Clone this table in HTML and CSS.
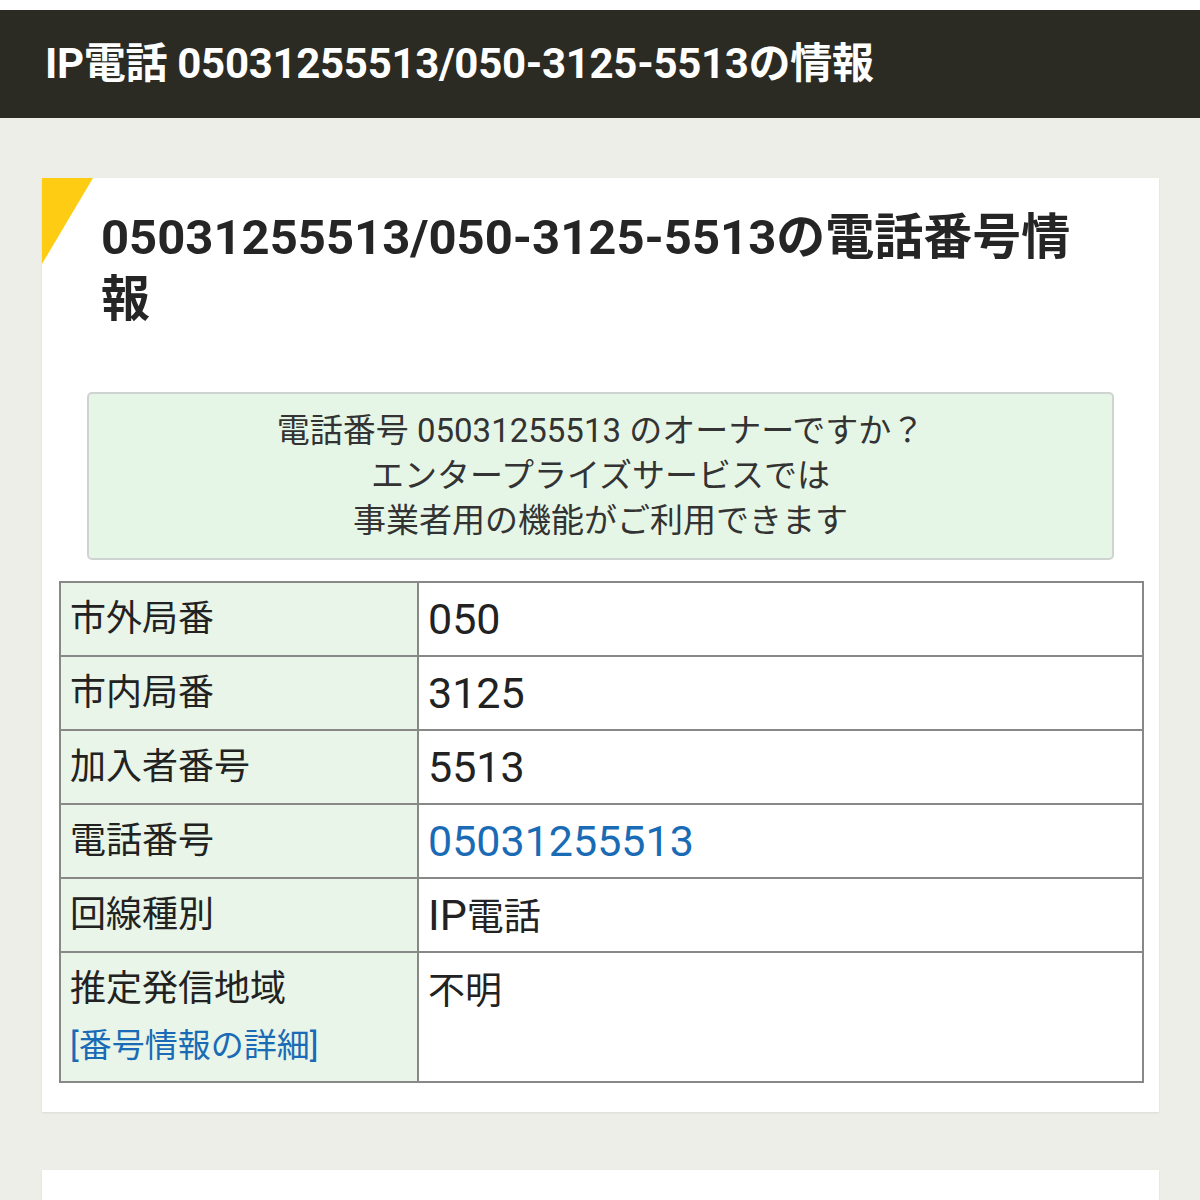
FILE: index.html
```html
<!DOCTYPE html>
<html lang="ja">
<head>
<meta charset="utf-8">
<title>IP電話 05031255513/050-3125-5513の情報</title>
<link rel="stylesheet" href="styles.css">
</head>
<body>
<header class="topbar">
  <h1 class="topbar-title">IP電話 05031255513/050-3125-5513の情報</h1>
</header>
<main class="page">
  <section class="card">
    <span class="corner"></span>
    <h2 class="card-title">05031255513/050-3125-5513の電話番号情報</h2>
    <div class="notice">
      電話番号 05031255513 のオーナーですか？<br>
      エンタープライズサービスでは<br>
      事業者用の機能がご利用できます
    </div>
    <table class="info">
      <tr><th>市外局番</th><td>050</td></tr>
      <tr><th>市内局番</th><td>3125</td></tr>
      <tr><th>加入者番号</th><td>5513</td></tr>
      <tr><th>電話番号</th><td><a class="link" href="#">05031255513</a></td></tr>
      <tr><th>回線種別</th><td>IP<span class="cjk">電話</span></td></tr>
      <tr class="tall"><th>推定発信地域<br><a class="link link-small" href="#">[番号情報の詳細]</a></th><td><span class="cjk">不明</span></td></tr>
    </table>
  </section>
  <section class="card card-next"></section>
</main>
</body>
</html>
```
FILE: styles.css
```css
html, body {
  margin: 0;
  padding: 0;
}
html {
  background: #ffffff;
}
body {
  background: #eeeee8;
  font-family: Roboto, "Noto Sans CJK JP", sans-serif;
  color: #222;
  padding-top: 10px;
  background-clip: content-box;
}
.topbar {
  background: #2b2b23;
  height: 108px;
  display: flex;
  align-items: center;
  padding-left: 45px;
}
.topbar-title {
  margin: 0;
  color: #fff;
  font-size: 42px;
  font-weight: 700;
  line-height: 1;
  letter-spacing: -0.3px;
}
.page {
  padding: 60px 41px 0 42px;
}
.card {
  position: relative;
  background: #fff;
  box-shadow: 0 1px 2px rgba(0,0,0,0.08);
  padding: 22px 15px 29px 17px;
  overflow: hidden;
}
.corner {
  position: absolute;
  left: 0;
  top: 0;
  width: 51px;
  height: 86px;
  background: #ffcc14;
  clip-path: polygon(0 0, 100% 0, 0 100%);
}
.card-title {
  margin: 0 70px 61px 42px;
  padding-top: 7px;
  font-size: 49px;
  line-height: 62px;
  font-weight: 700;
  color: #252525;
}
.notice {
  margin: 0 30px 21px 28px;
  background: #e6f6e6;
  border: 2px solid #d0d4d0;
  border-radius: 5px;
  text-align: center;
  font-size: 33px;
  line-height: 45px;
  color: #333;
  padding: 14px 10px 15px;
}
.info {
  width: 100%;
  border-collapse: collapse;
  border: 2px solid #888;
  line-height: 56px;
}
.info th, .info td {
  border: 2px solid #888;
  padding: 8px 9px;
  text-align: left;
  vertical-align: top;
  font-weight: 400;
}
.info th {
  width: 338px;
  background: #e8f5e8;
  font-size: 36px;
}
.info td {
  background: #fff;
  font-size: 43px;
}
.cjk {
  font-size: 37px;
  line-height: 40px;
}
.link {
  color: #1a6bb5;
  text-decoration: none;
}
.link-small {
  font-size: 33px;
  line-height: 44px;
}
.card-next {
  margin-top: 58px;
  height: 60px;
  padding: 0;
}
```
